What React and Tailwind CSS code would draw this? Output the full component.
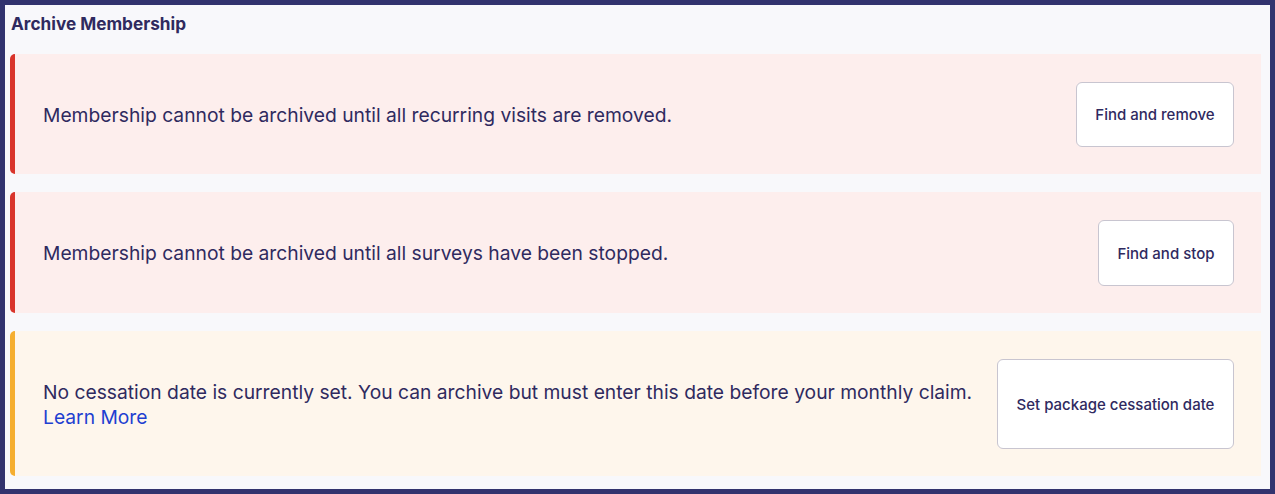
import React from "react";

const font = { fontFamily: "Inter, 'Noto Sans', sans-serif" };

function Card({ stripe, bg, height, children, button, btnW, btnH }) {
  return (
    <div
      className={`flex items-center justify-between rounded-l-[5px] border-l-[5px] ${stripe} ${bg} pl-[28px] pr-[27px]`}
      style={{ height }}
    >
      <div className="pt-[2px] text-[19.25px] leading-[25px] text-[#2f2a5f]">{children}</div>
      <button
        className="flex items-center justify-center rounded-[6px] border border-[#c8c5d0] bg-white pt-[3px] text-[15px] font-medium text-[#2f2a5f]"
        style={{ width: btnW, height: btnH }}
      >
        {button}
      </button>
    </div>
  );
}

export default function App() {
  return (
    <div
      className="h-[494px] w-[1275px] border-[5px] border-[#32336e] bg-[#f8f8fb] pl-[5px] pr-[9px]"
      style={font}
    >
      <div className="pl-[1px] pt-[8px] pb-[20px] text-[17.2px] font-bold leading-[21px] text-[#2f2a5f]">
        Archive Membership
      </div>
      <div className="flex flex-col gap-[18px]">
        <Card
          stripe="border-[#d9342b]"
          bg="bg-[#fdeeed]"
          height={120}
          button="Find and remove"
          btnW={158}
          btnH={65}
        >
          Membership cannot be archived until all recurring visits are removed.
        </Card>
        <Card
          stripe="border-[#d9342b]"
          bg="bg-[#fdeeed]"
          height={121}
          button="Find and stop"
          btnW={136}
          btnH={66}
        >
          Membership cannot be archived until all surveys have been stopped.
        </Card>
        <Card
          stripe="border-[#f5ae30]"
          bg="bg-[#fef6ec]"
          height={145}
          button="Set package cessation date"
          btnW={237}
          btnH={90}
        >
          <div>No cessation date is currently set. You can archive but must enter this date before your monthly claim.</div>
          <a className="text-[#1f3fd1]">Learn More</a>
        </Card>
      </div>
    </div>
  );
}
